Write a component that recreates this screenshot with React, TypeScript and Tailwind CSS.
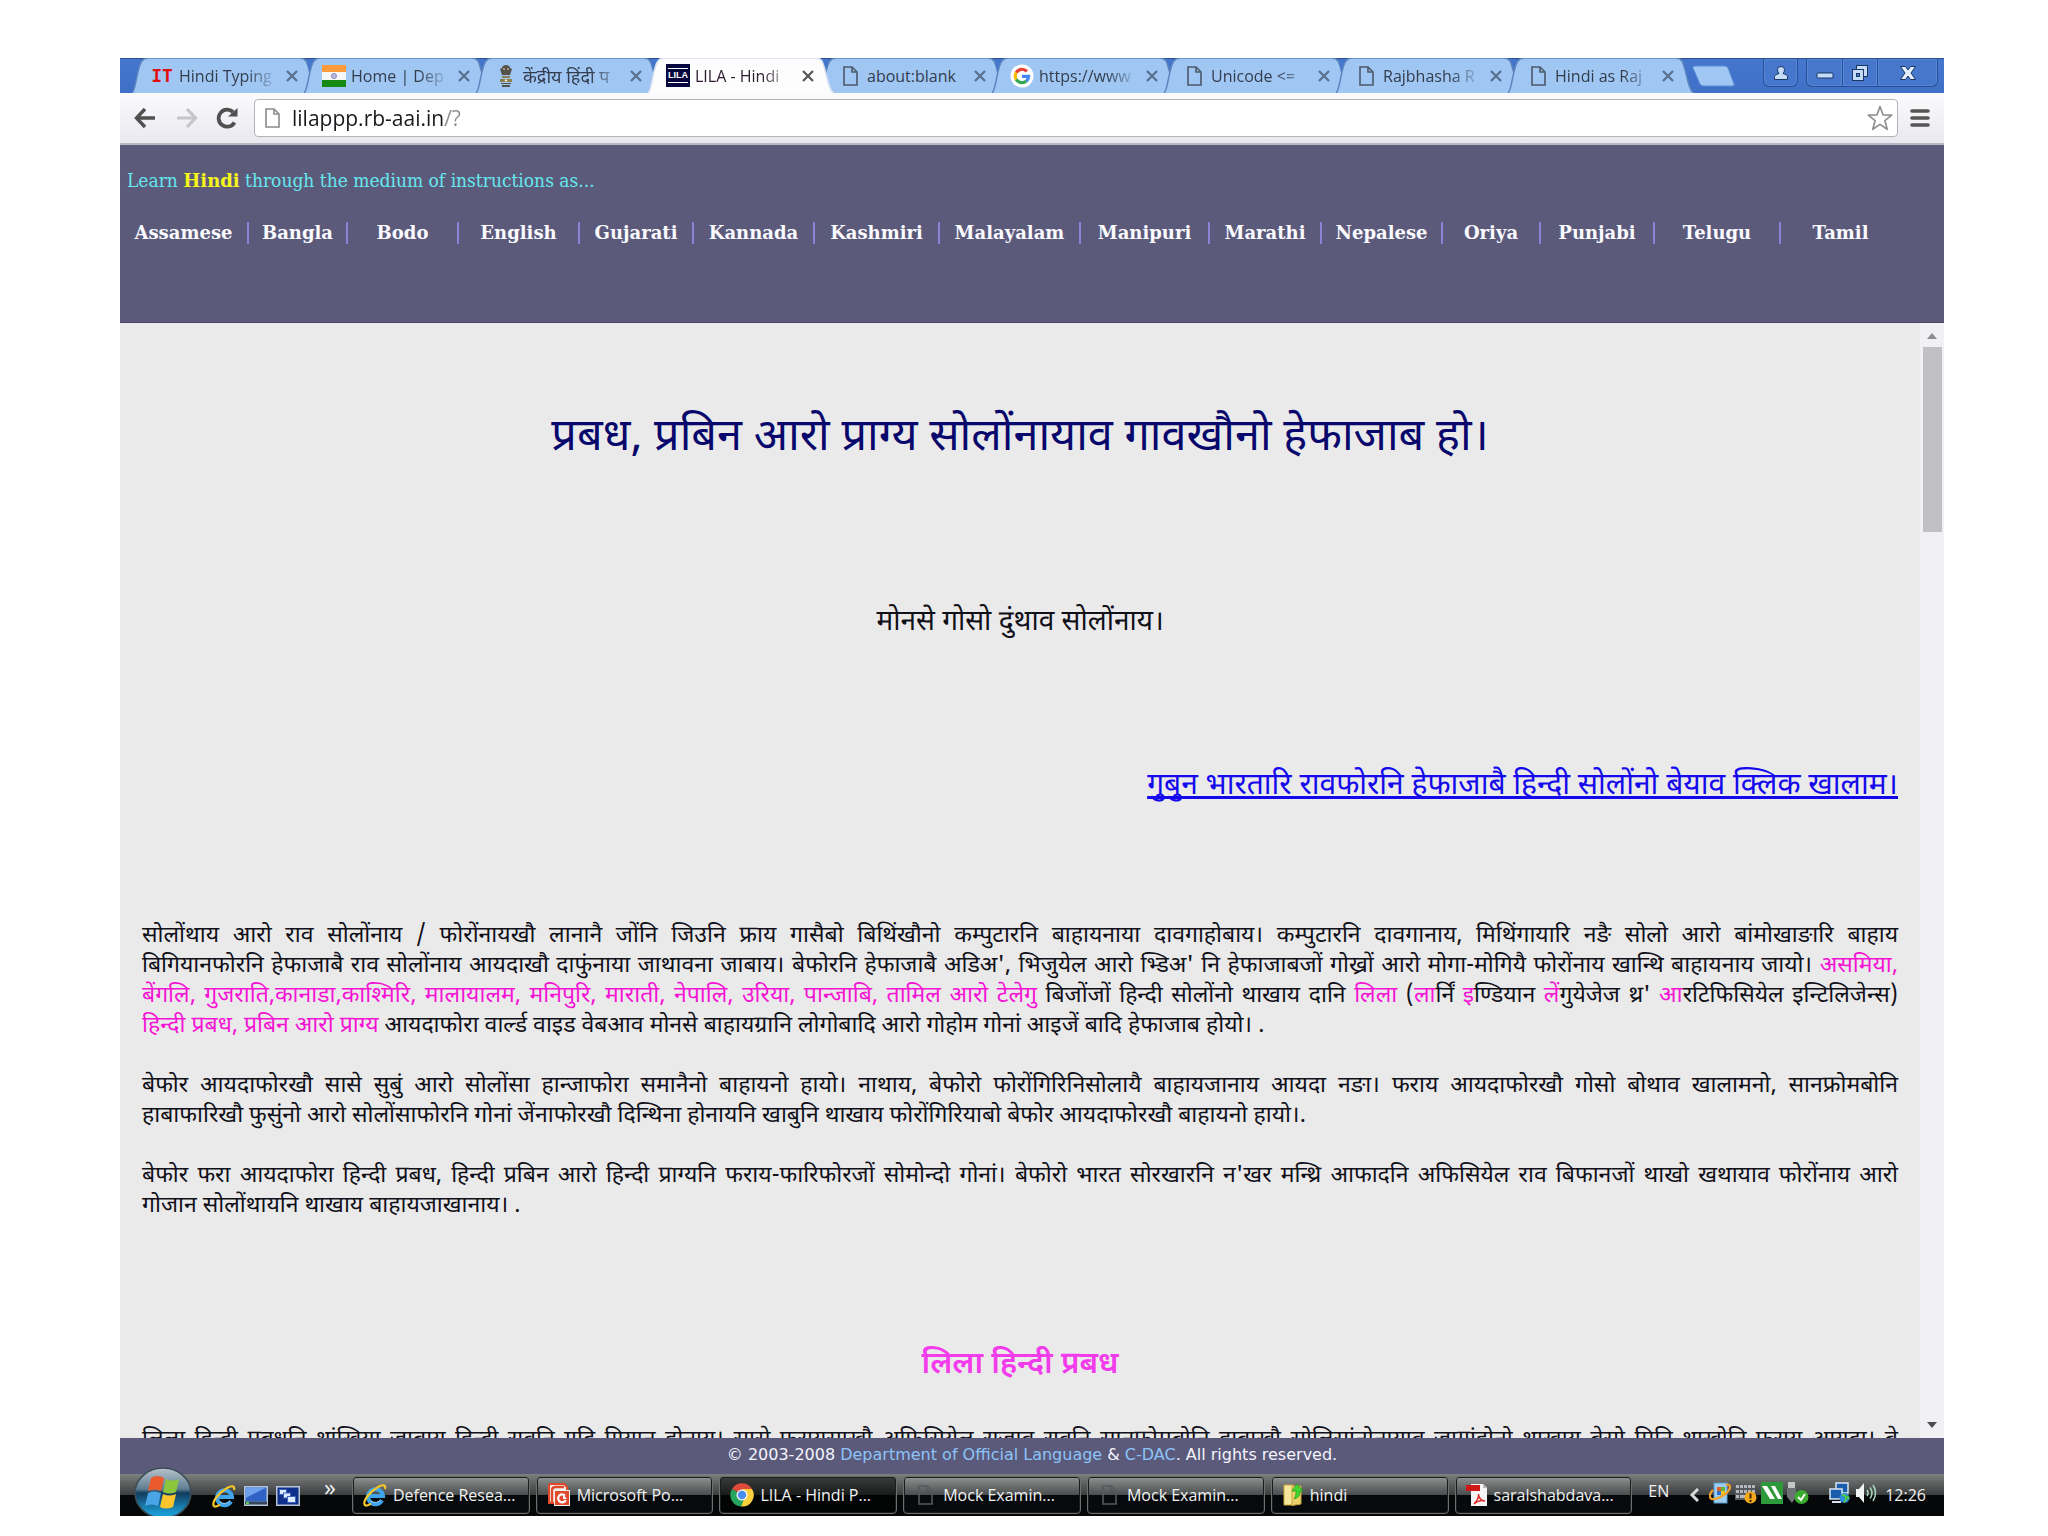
import React from "react";

const UI = "font-['Open_Sans','Noto_Sans',sans-serif]";

function PageIcon({ className = "" }: { className?: string }) {
  return (
    <svg viewBox="0 0 15 20" className={"h-5 w-[15px] " + className} fill="none" stroke="currentColor" strokeWidth="1.6" aria-hidden="true">
      <path d="M1 1h8l5 5v13H1z" />
      <path d="M9 1v5h5" />
    </svg>
  );
}

function FlagIcon() {
  return (
    <svg viewBox="0 0 24 24" className="h-6 w-6" aria-hidden="true">
      <rect y="1" width="24" height="7" fill="#ff9b3a" />
      <rect y="8" width="24" height="8" fill="#f6f6f6" />
      <rect y="16" width="24" height="7" fill="#168a10" />
      <circle cx="12" cy="12" r="2.500" fill="#b9b9dc" stroke="#8a8ac0" />
    </svg>
  );
}

function EmblemIcon() {
  return (
    <svg viewBox="0 0 16 22" className="h-[22px] w-4" fill="#55524a" aria-hidden="true">
      <path d="M4 3c0-2 2-3 4-3s4 1 4 3l2 1-1 3-1 3H4L3 7 2 4z" />
      <path d="M4 11h8v2H4zM2 14h12v3H2z" fill="#8a7f50" />
      <path d="M3 18h10v1H3zM4 20h8v2H4z" />
      <circle cx="6" cy="4" r="1" fill="#b4b09a" />
      <circle cx="10" cy="4" r="1" fill="#b4b09a" />
      <circle cx="8" cy="15.500" r="1.200" fill="#ece6c8" />
    </svg>
  );
}

function LilaIcon() {
  return (
    <span className="flex h-[23px] w-6 items-center justify-center bg-[#06073f]">
      <span className="border-y border-white text-[9px] leading-[13px] font-bold text-white font-['Liberation_Sans',sans-serif]">LILA</span>
    </span>
  );
}

function GoogleIcon() {
  return (
    <svg viewBox="0 0 24 24" className="h-6 w-6" fill="none" strokeWidth="3.200" aria-hidden="true">
      <circle cx="12" cy="12" r="11.500" fill="#fff" />
      <path d="M16.900 7.400A6.700 6.700 0 0 0 6.200 8.600" stroke="#ea4335" />
      <path d="M6.200 8.600a6.700 6.700 0 0 0 0 6.800" stroke="#fbbc05" />
      <path d="M6.200 15.400a6.700 6.700 0 0 0 10.200 1.600" stroke="#34a853" />
      <path d="M16.400 17a6.700 6.700 0 0 0 2.200-4.600H12" stroke="#4285f4" />
    </svg>
  );
}

function ITIcon() {
  return <span className="w-6 text-center text-[18px] leading-6 font-bold text-[#e01010] font-['DejaVu_Sans_Mono',monospace]">IT</span>;
}

const tabs: { title: string; icon: React.ReactNode; active?: boolean; hindi?: boolean }[] = [
  { title: "Hindi Typing", icon: <ITIcon /> },
  { title: "Home | Dep", icon: <FlagIcon /> },
  { title: "केंद्रीय हिंदी प", icon: <EmblemIcon />, hindi: true },
  { title: "LILA - Hindi", icon: <LilaIcon />, active: true },
  { title: "about:blank", icon: <PageIcon className="text-[#4c5968]" /> },
  { title: "https://www", icon: <GoogleIcon /> },
  { title: "Unicode <=", icon: <PageIcon className="text-[#4c5968]" /> },
  { title: "Rajbhasha R", icon: <PageIcon className="text-[#4c5968]" /> },
  { title: "Hindi as Raj", icon: <PageIcon className="text-[#4c5968]" /> },
];

function Tab({ title, icon, active, hindi }: { title: string; icon: React.ReactNode; active?: boolean; hindi?: boolean }) {
  return (
    <div className={"relative -mr-3.5 flex h-[35px] w-[186px] min-w-0 items-center pl-[18px] pr-4 " + (active ? "z-10" : "")}>
      <svg viewBox="0 0 186 35" preserveAspectRatio="none" className="absolute inset-0 h-full w-full" aria-hidden="true">
        <path d="M0 35C4 33 5 8 10 3Q12 0 16 0H168Q172 0 174 3C178 10 180 33 186 35" fill={active ? "#fdfdfe" : "#a0c6f4"} stroke={active ? "#d5dfee" : "#5a84be"} strokeWidth="1.500" />
      </svg>
      <div className="relative flex w-6 shrink-0 justify-center">{icon}</div>
      <span
        className={
          "relative ml-[5px] min-w-0 flex-1 overflow-hidden leading-6 whitespace-nowrap " +
          (hindi ? "text-lg " : "text-base ") +
          (title === "about:blank" ? "" : "[mask-image:linear-gradient(to_right,black_68%,transparent_100%)] ") +
          (active ? "text-[#2a1a2c]" : "text-[#333d4c]")
        }
      >
        {title}
      </span>
      <button aria-label={"Close " + title} className={"relative ml-1 shrink-0 p-1 " + (active ? "text-[#555]" : "text-[#59708f]")}>
        <svg viewBox="0 0 12 12" className="h-3 w-3" stroke="currentColor" strokeWidth="2.200" aria-hidden="true">
          <path d="M1 1l10 10M11 1L1 11" />
        </svg>
      </button>
    </div>
  );
}

function WindowControls() {
  const cell = "flex h-7 items-center justify-center border border-t-0 border-[#2a4f94] bg-[#4677cc] shadow-[inset_0_0_0_1px_#5585d6]";
  return (
    <div className="mr-1.5 flex items-start">
      <button aria-label="Profile" className={cell + " mr-2 w-[35px] rounded-b-md"}>
        <svg viewBox="0 0 16 16" className="h-4 w-4" fill="#c4dcf8" stroke="#1c3764" aria-hidden="true">
          <path d="M1.500 14.500V11.500Q1.500 9.500 6 8.500 4.500 7 4.500 4.500 4.500 1.500 8 1.500T11.500 4.500Q11.500 7 10 8.500q4.500 1 4.500 3v3z" />
        </svg>
      </button>
      <button aria-label="Minimize" className={cell + " w-[37px] rounded-bl-md"}>
        <svg viewBox="0 0 20 16" className="h-4 w-5" fill="#c4dcf8" stroke="#1c3764" aria-hidden="true">
          <rect x="2" y="8" width="16" height="5" rx="1" />
        </svg>
      </button>
      <button aria-label="Restore" className={cell + " w-[35px] border-l-0"}>
        <svg viewBox="0 0 20 20" className="h-5 w-5" fill="#c4dcf8" stroke="#1c3764" aria-hidden="true">
          <rect x="6.500" y="2.500" width="11" height="11" />
          <rect x="2.500" y="6.500" width="11" height="11" />
          <rect x="6.500" y="10.500" width="3" height="3" fill="#4a7bd0" />
        </svg>
      </button>
      <button aria-label="Close window" className={cell + " w-[60px] rounded-br-md border-l-0"}>
        <svg viewBox="0 0 18 16" className="h-4 w-[18px]" fill="#e4eefb" stroke="#1c3764" aria-hidden="true">
          <path d="M1.500 1.500h5L9 5l2.500-3.500h5L12 8l4.500 6.500h-5L9 11l-2.500 3.500h-5L6 8z" />
        </svg>
      </button>
    </div>
  );
}

function TabStrip() {
  return (
    <div className={"flex h-[35px] border-t border-[#2c4f92] bg-linear-to-b from-[#4577cf] to-[#3f6fc6] " + UI}>
      <div className="flex min-w-0 flex-1 items-end pl-3">
        {tabs.map((t) => (
          <Tab key={t.title} {...t} />
        ))}
        <button aria-label="New tab" className="ml-3 shrink-0 self-center">
          <svg viewBox="0 0 44 22" className="h-[22px] w-11" aria-hidden="true">
            <path d="M3 1h29q3 0 4 2l6 16q1 2-2 2H12q-3 0-4-2L1 3q-1-2 2-2z" fill="#a0c6f4" stroke="#5f8fd2" />
          </svg>
        </button>
      </div>
      <WindowControls />
    </div>
  );
}

function Toolbar() {
  return (
    <div className={"flex h-[52px] items-center border-b-2 border-[#b9b5c4] bg-linear-to-b from-[#fbfbfc] to-[#e9e8f0] pl-3.5 pr-3.5 " + UI}>
      <button aria-label="Back" className="text-[#505050]">
        <svg viewBox="0 0 22 22" className="h-[22px] w-[22px]" fill="none" stroke="currentColor" strokeWidth="3.400" aria-hidden="true">
          <path d="M21 11H3M11 2L2.500 11l8.500 9" />
        </svg>
      </button>
      <button aria-label="Forward" className="ml-5 text-[#c6c6c8]">
        <svg viewBox="0 0 22 22" className="h-[22px] w-[22px]" fill="none" stroke="currentColor" strokeWidth="3.200" aria-hidden="true">
          <path d="M1 11h18M11 2l8.500 9-8.500 9" />
        </svg>
      </button>
      <button aria-label="Reload" className="ml-[18px] text-[#505050]">
        <svg viewBox="0 0 22 22" className="h-[22px] w-[22px]" fill="none" stroke="currentColor" strokeWidth="3.800" aria-hidden="true">
          <path d="M18.500 15.500A8.500 8.500 0 1 1 17 5" />
          <path d="M21.500 1v8.500H12z" fill="currentColor" stroke="none" />
        </svg>
      </button>
      <div className="ml-4 flex h-[38px] min-w-0 flex-1 items-center rounded border border-[#b4b4b8] bg-white px-2.5">
        <PageIcon className="mr-3 shrink-0 text-[#8a8a8a]" />
        <input
          aria-label="Address"
          defaultValue="lilappp.rb-aai.in/?"
          className="h-8 min-w-0 flex-1 bg-linear-to-r from-[#16181c] from-[153px] to-[#8c8c8c] to-[153px] bg-clip-text text-[21px] text-transparent outline-none"
        />
        <button aria-label="Bookmark this page" className="-mr-1.5 text-[#909090]">
          <svg viewBox="0 0 26 26" className="h-[26px] w-[26px]" fill="#fff" stroke="currentColor" strokeWidth="1.700" strokeLinejoin="round" aria-hidden="true">
            <path d="M13 1.500l3 8.300 8.700.4-6.800 5.400 2.300 8.700L13 19.400l-7.200 4.900 2.300-8.700L1.300 10.200l8.700-.4z" />
          </svg>
        </button>
      </div>
      <button aria-label="Menu" className="ml-3 text-[#555]">
        <svg viewBox="0 0 20 20" className="h-5 w-5" stroke="currentColor" strokeWidth="3.600" strokeLinecap="round" aria-hidden="true">
          <path d="M2 3h16M2 10h16M2 17h16" />
        </svg>
      </button>
    </div>
  );
}

const languages = ["Assamese", "Bangla", "Bodo", "English", "Gujarati", "Kannada", "Kashmiri", "Malayalam", "Manipuri", "Marathi", "Nepalese", "Oriya", "Punjabi", "Telugu", "Tamil"];

function SiteHeader() {
  return (
    <header className="h-[178px] border-b border-[#4a4664] bg-[#5b5a7b] pt-5 font-['DejaVu_Serif',serif]">
      <p className="pl-[7px] text-[19px] leading-[30px] text-[#66e8ee] font-['DejaVu_Serif_Condensed','DejaVu_Serif',serif]">
        Learn <b className="text-lg leading-[30px] text-[#f6f61c] font-['DejaVu_Serif',serif]">Hindi</b> through the medium of instructions as...
      </p>
      <nav aria-label="Languages" className="mt-[26px] mr-11 grid grid-cols-[129fr_99fr_111fr_121fr_114fr_121fr_125fr_141fr_129fr_112fr_121fr_98fr_114fr_126fr_119fr] divide-x-2 divide-[#8d82d6]">
        {languages.map((l) => (
          <a key={l} href="#" className="text-center text-lg leading-[22px] font-bold text-[#fafaff]">
            {l}
          </a>
        ))}
      </nav>
    </header>
  );
}

function P({ children }: { children: React.ReactNode }) {
  return <span className="text-[#f414d4]">{children}</span>;
}

function Lines({ lines, className = "", continues = false }: { lines: React.ReactNode[]; className?: string; continues?: boolean }) {
  return (
    <p className={"text-[23px] leading-[30px] text-[#101018] " + className}>
      {lines.map((line, i) => (
        <span key={i} className={"block whitespace-nowrap [text-align-last:justify] " + (continues ? "" : "last:[text-align-last:left]")}>
          {line}
        </span>
      ))}
    </p>
  );
}

function Content() {
  return (
    <main className="relative flex min-h-0 flex-1 overflow-hidden bg-[#ebeaeb] font-['Noto_Sans_Devanagari','Noto_Sans',sans-serif]">
      <div className="min-w-0 flex-1 pr-[22px] pl-[22px]">
        <h1 className="mt-[84px] text-center text-[45px] leading-[64px] text-[#08086c]">प्रबध, प्रबिन आरो प्राग्य सोलोंनायाव गावखौनो हेफाजाब हो।</h1>
        <p className="mt-[132px] text-center text-[28px] leading-10 text-[#101018]">मोनसे गोसो दुंथाव सोलोंनाय।</p>
        <p className="mt-[124px] text-right text-[30px] leading-10">
          <a href="#" className="text-[#1408ec] underline decoration-[3px] underline-offset-2 [text-decoration-skip-ink:none]">
            गुबुन भारतारि रावफोरनि हेफाजाबै हिन्दी सोलोंनो बेयाव क्लिक खालाम।
          </a>
        </p>
        <Lines
          className="mt-[114px]"
          lines={[
            <>सोलोंथाय आरो राव सोलोंनाय / फोरोंनायखौ लानानै जोंनि जिउनि फ्राय गासैबो बिथिंखौनो कम्पुटारनि बाहायनाया दावगाहोबाय। कम्पुटारनि दावगानाय, मिथिंगायारि नङै सोलो आरो बांमोखाङारि बाहाय</>,
            <>बिगियानफोरनि हेफाजाबै राव सोलोंनाय आयदाखौ दाफुंनाया जाथावना जाबाय। बेफोरनि हेफाजाबै अडिअ', भिजुयेल आरो भ्डिअ' नि हेफाजाबजों गोख्रों आरो मोगा-मोगियै फोरोंनाय खान्थि बाहायनाय जायो। <P>असमिया,</P></>,
            <><P>बेंगलि, गुजराति,कानाडा,काश्मिरि, मालायालम, मनिपुरि, माराती, नेपालि, उरिया, पान्जाबि, तामिल आरो टेलेगु</P> बिजोंजों हिन्दी सोलोंनो थाखाय दानि <P>लिला</P> (<P>ला</P>र्निं <P>इ</P>ण्डियान <P>लें</P>गुयेजेज थ्र' <P>आ</P>रटिफिसियेल इन्टिलिजेन्स)</>,
            <><P>हिन्दी प्रबध, प्रबिन आरो प्राग्य</P> आयदाफोरा वार्ल्ड वाइड वेबआव मोनसे बाहायग्रानि लोगोबादि आरो गोहोम गोनां आइजें बादि हेफाजाब होयो। .</>,
          ]}
        />
        <Lines
          className="mt-[30px]"
          lines={[
            "बेफोर आयदाफोरखौ सासे सुबुं आरो सोलोंसा हान्जाफोरा समानैनो बाहायनो हायो। नाथाय, बेफोरो फोरोंगिरिनिसोलायै बाहायजानाय आयदा नङा। फराय आयदाफोरखौ गोसो बोथाव खालामनो, सानफ्रोमबोनि",
            "हाबाफारिखौ फुसुंनो आरो सोलोंसाफोरनि गोनां जेंनाफोरखौ दिन्थिना होनायनि खाबुनि थाखाय फोरोंगिरियाबो बेफोर आयदाफोरखौ बाहायनो हायो।.",
          ]}
        />
        <Lines
          className="mt-[30px]"
          lines={[
            "बेफोर फरा आयदाफोरा हिन्दी प्रबध, हिन्दी प्रबिन आरो हिन्दी प्राग्यनि फराय-फारिफोरजों सोमोन्दो गोनां। बेफोरो भारत सोरखारनि न'खर मन्थ्रि आफादनि अफिसियेल राव बिफानजों थाखो खथायाव फोरोंनाय आरो",
            "गोजान सोलोंथायनि थाखाय बाहायजाखानाय। .",
          ]}
        />
        <h2 className="mt-[125px] text-center text-[31px] leading-10 font-semibold text-[#f23cec]">लिला हिन्दी प्रबध</h2>
        <Lines
          continues
          className="mt-[39px]"
          lines={[
            "लिला हिन्दी प्रबधनि थांखिया जाबाय हिन्दी रावनि गुदि गियान होनाय। सासे फरायसाखौ अफिसियेल राजाव रावनि सानफ्रोमबोनि हाबाखौ सोलिसांनोनायाव जाग्रांहोनो थाखाय बेसो मिनि थाखोनि फराय आयदा। बे",
          ]}
        />
      </div>
      <div className="flex w-6 shrink-0 flex-col items-center justify-between bg-[#f1f0f3] py-2.5" aria-hidden="true">
        <svg viewBox="0 0 10 6" className="h-1.5 w-2.5 fill-[#8c8c90]"><path d="M0 6l5-6 5 6z" /></svg>
        <div className="mt-2 h-[185px] w-[19px] bg-[#c1c0c3]" />
        <div className="flex-1" />
        <svg viewBox="0 0 10 6" className="h-1.5 w-2.5 fill-[#4c4c50]"><path d="M0 0l5 6 5-6z" /></svg>
      </div>
    </main>
  );
}

function SiteFooter() {
  return (
    <footer className="relative h-9 bg-[#5b5a7b] text-center text-base leading-[34px] text-[#f4f4fc] font-['DejaVu_Sans',sans-serif]">
      © 2003-2008 <a href="#" className="text-[#8cc4f8]">Department of Official Language</a> &amp; <a href="#" className="text-[#8cc4f8]">C-DAC</a>. All rights reserved.
    </footer>
  );
}

function IEIcon() {
  return (
    <svg viewBox="0 0 24 24" className="h-6 w-6 shrink-0" fill="none" aria-hidden="true">
      <path d="M19 17.500A7.500 7.500 0 1 1 20 13H7" stroke="#3fa4ea" strokeWidth="4" />
      <path d="M18 16.500A7 7 0 0 1 8 18" stroke="#9ad6fa" strokeWidth="1" />
      <path d="M22 6c1-4-2-5-7-2C8 8 0 17 1.500 21.500c.8 2 4 1 6.500-.8" stroke="#f5c528" strokeWidth="2.200" />
    </svg>
  );
}

function DesktopIcon() {
  return (
    <svg viewBox="0 0 24 20" className="h-5 w-6" aria-hidden="true">
      <rect width="24" height="20" fill="#b8c4d4" />
      <rect x="1.500" y="1.500" width="21" height="14" fill="#2f62c4" />
      <path d="M1.500 1.500h21L1.500 12z" fill="#6fa0ec" />
      <rect x="1" y="15.500" width="22" height="3" fill="#33465e" />
      <circle cx="3.500" cy="17" r="1.600" fill="#5fd05a" />
    </svg>
  );
}

function SwitchIcon() {
  return (
    <svg viewBox="0 0 24 20" className="h-5 w-6" aria-hidden="true">
      <rect width="24" height="20" fill="#b8c4d4" />
      <rect x="1.500" y="1.500" width="21" height="17" fill="#0f2f8c" />
      <g fill="#dcebff" stroke="#3a62b8">
        <rect x="3.500" y="3.500" width="7" height="5" />
        <rect x="7.500" y="7" width="7" height="5" />
        <rect x="11.500" y="10.500" width="8" height="6" />
      </g>
    </svg>
  );
}

function PowerPointIcon() {
  return (
    <svg viewBox="0 0 24 24" className="h-6 w-6 shrink-0" fill="none" aria-hidden="true">
      <path d="M2 3Q2 1 4 1h13l3 3v16H2z" fill="#f0f0ee" stroke="#e0492c" strokeWidth="2" />
      <path d="M5 19V7q0-3 4-3h8" stroke="#e0492c" strokeWidth="2.400" />
      <rect x="7" y="7" width="16" height="16" fill="#f0f0ee" />
      <rect x="8" y="8" width="14" height="14" fill="#e0492c" />
      <path d="M18 12.500a4 4 0 1 0 .8 4.500" stroke="#fff" strokeWidth="2.200" />
      <path d="M16 11v5h4z" fill="#fff" />
    </svg>
  );
}

function ChromeIcon() {
  return (
    <svg viewBox="0 0 24 24" className="h-6 w-6 shrink-0" aria-hidden="true">
      <path d="M12 12L2 6a11.500 11.500 0 0 1 20 0z" fill="#de4a3c" />
      <path d="M12 12L2 6a11.500 11.500 0 0 0 9 17.500l5-8z" fill="#26a35c" />
      <path d="M12 12h4l-5 11.500A11.500 11.500 0 0 0 22 6H12z" fill="#fccf3c" />
      <circle cx="12" cy="12" r="5.500" fill="#f4f4f4" />
      <circle cx="12" cy="12" r="4.200" fill="#4a8cf0" />
    </svg>
  );
}

function FolderIcon() {
  return (
    <svg viewBox="0 0 22 24" className="h-6 w-[22px] shrink-0" aria-hidden="true">
      <path d="M2 2h9v20H2z" fill="#f6e89a" stroke="#c8a83c" />
      <path d="M10 3h9v18l-9 1.500z" fill="#ecd068" stroke="#c8a83c" />
      <path d="M15 1l6 7h-3c0 5-2 7-6 8 2-3 2-5 2-8h-4z" fill="#3fd430" stroke="#1d9618" strokeWidth=".7" />
    </svg>
  );
}

function PdfIcon() {
  return (
    <svg viewBox="0 0 22 24" className="h-6 w-[22px] shrink-0" aria-hidden="true">
      <path d="M5 1h12l4 4v18H5z" fill="#f6f4f4" />
      <path d="M17 1v4h4z" fill="#bcbcbc" />
      <rect y="2" width="14" height="6" fill="#d01818" />
      <path d="M8 21c3-3 5-6 4.500-10 0 4 3 7 6.500 7-4-1-8 0-11 3z" fill="none" stroke="#e02424" strokeWidth="1.400" />
    </svg>
  );
}

function StartOrb() {
  return (
    <button aria-label="Start" className="relative z-10 -mt-[7px] h-[49px] w-[58px] shrink-0 overflow-hidden">
      <svg viewBox="0 0 58 49" className="h-full w-full" aria-hidden="true">
        <defs>
          <linearGradient id="orb" x1="0" y1="0" x2="0" y2="1">
            <stop offset="0" stopColor="#b8c4cc" />
            <stop offset=".42" stopColor="#5f7e92" />
            <stop offset=".5" stopColor="#123c5c" />
            <stop offset=".9" stopColor="#1b9ad2" />
          </linearGradient>
        </defs>
        <ellipse cx="29" cy="26" rx="28" ry="25" fill="url(#orb)" stroke="#3c4c56" strokeWidth="1.500" />
        <path d="M17 11q6-4 13 0l-3 13q-6-3-13 0z" fill="#ea5a2c" />
        <path d="M32 12q6 3 13 0l-3 13q-7 3-13 0z" fill="#8cc63c" />
        <path d="M14 26q6-3 13 0l-3 13q-6-3-13 0z" fill="#4aa4e8" />
        <path d="M29 27q6 3 13 0l-3 13q-7 3-13 0z" fill="#fcc62c" />
      </svg>
    </button>
  );
}

const tasks: { label: string; icon: React.ReactNode; active?: boolean }[] = [
  { label: "Defence Resea...", icon: <IEIcon /> },
  { label: "Microsoft Po...", icon: <PowerPointIcon /> },
  { label: "LILA - Hindi P...", icon: <ChromeIcon />, active: true },
  { label: "Mock Examin...", icon: <PageIcon className="mx-1 shrink-0 text-[#555a5c]" /> },
  { label: "Mock Examin...", icon: <PageIcon className="mx-1 shrink-0 text-[#555a5c]" /> },
  { label: "hindi", icon: <FolderIcon /> },
  { label: "saralshabdava...", icon: <PdfIcon /> },
];

function TrayIcons() {
  return (
    <div className="mb-1 flex items-center gap-1">
      <svg viewBox="0 0 22 22" className="h-[22px] w-[22px]" aria-hidden="true">
        <rect x="5" y="1" width="13" height="20" fill="#9ccdf2" stroke="#5c9cce" />
        <path d="M8 5h4v4H8z" fill="#e0602c" /><path d="M12 5h4v4h-4z" fill="#60b43c" /><path d="M8 9h4v4H8z" fill="#2c74d0" /><path d="M12 9h4v4h-4z" fill="#f4c02c" />
        <path d="M4 8c-5 5-4 10 2 9 7-1 15-8 15-12 0-2-2-3-4-2" fill="none" stroke="#f0a028" strokeWidth="2.200" />
      </svg>
      <svg viewBox="0 0 22 22" className="h-[22px] w-[22px]" aria-hidden="true">
        <path d="M0 2h20v16H0z" fill="#55585c" />
        <path d="M1 3h3v3H1zM5 3h3v3H5zM9 3h3v3H9zM13 3h3v3h-3zM17 3h3v3h-3zM1 8h3v3H1zM5 8h3v3H5zM9 8h3v3H9zM13 8h3v3h-3zM17 8h3v3h-3zM1 13h3v3H1zM5 13h6v3H5z" fill="#b4b6ba" />
        <circle cx="15.500" cy="15.500" r="6" fill="#f4a81c" />
        <path d="M15.500 11.500v5M15.500 18v2" stroke="#3c2800" strokeWidth="2" />
      </svg>
      <svg viewBox="0 0 22 22" className="h-[22px] w-[22px]" aria-hidden="true">
        <rect width="22" height="22" fill="#2f9a3c" />
        <path d="M1 4h5l8 13H9zM10 4h4l7 13h-4z" fill="#fff" />
      </svg>
      <svg viewBox="0 0 22 22" className="h-[22px] w-[22px]" aria-hidden="true">
        <rect x="1" width="7" height="6" fill="#c4c6c8" />
        <path d="M0 6h9v9l-4 6-5-6z" fill="#6c7074" />
        <circle cx="14.500" cy="15" r="7" fill="#3cac30" />
        <path d="M11 15l3 3 4-6" fill="none" stroke="#fff" strokeWidth="2" />
      </svg>
      <svg viewBox="0 0 22 22" className="ml-4 h-[22px] w-[22px]" aria-hidden="true">
        <rect x="7" y="1" width="12" height="10" fill="#1c5cac" stroke="#d8e6f4" strokeWidth="1.500" />
        <rect x="1" y="7" width="12" height="10" fill="#1c5cac" stroke="#d8e6f4" strokeWidth="1.500" />
        <path d="M3 20h9" stroke="#d8e6f4" strokeWidth="2" />
        <circle cx="15.500" cy="16" r="5" fill="#2c8ce0" /><path d="M13 13q4 0 4 3t-2 4M18 14l2 3" stroke="#50c83c" strokeWidth="2" fill="none" />
      </svg>
      <svg viewBox="0 0 22 22" className="h-[22px] w-[22px]" fill="none" aria-hidden="true">
        <path d="M1 7h3l5-6v20l-5-6H1z" fill="#f2f4f4" />
        <path d="M12 8q2 3 0 6M15 5.500q4 5.500 0 11M18 3q5 8 0 16" stroke="#a8dcc0" strokeWidth="1.500" />
      </svg>
    </div>
  );
}

function Taskbar() {
  return (
    <div className={"flex h-[42px] items-center bg-linear-to-b from-[#7e807f] via-[#3a3d3e] via-50% to-[#050708] to-50% text-[#f0f2f2] " + UI}>
      <div className="ml-3.5 self-start"><StartOrb /></div>
      <div className="ml-5 flex items-center gap-2 pt-0.5">
        <IEIcon />
        <DesktopIcon />
        <SwitchIcon />
      </div>
      <button aria-label="More shortcuts" className="mb-4 ml-6 text-2xl leading-5">»</button>
      <div className="ml-4 flex min-w-0 flex-1 gap-1.5">
        {tasks.map((t, i) => (
          <button
            key={i}
            className={
              "flex h-[38px] min-w-0 flex-1 items-center gap-1.5 rounded border border-[#6c706f] px-2.5 text-base shadow-[inset_0_0_0_1px_#1c1e1e] " +
              (t.active
                ? "bg-linear-to-b from-[#3a3d3c] via-[#1a1c1c] via-50% to-[#020303] to-50%"
                : "bg-linear-to-b from-[#909392] via-[#4a4d4d] via-50% to-[#070a0c] to-50%")
            }
          >
            {t.icon}
            <span className="truncate">{t.label}</span>
          </button>
        ))}
      </div>
      <span className="mb-2 ml-4 text-base">EN</span>
      <button aria-label="Show hidden icons" className="ml-5 mr-2.5">
        <svg viewBox="0 0 10 14" className="h-3.5 w-2.5" fill="none" stroke="#d8dada" strokeWidth="3" aria-hidden="true"><path d="M9 1L3 7l6 6" /></svg>
      </button>
      <TrayIcons />
      <span className="mr-[18px] ml-2 text-base">12:26</span>
    </div>
  );
}

export default function App() {
  return (
    <div className="flex h-screen flex-col bg-white pt-[58px] pr-[104px] pb-5 pl-[120px]">
      <TabStrip />
      <Toolbar />
      <SiteHeader />
      <Content />
      <SiteFooter />
      <Taskbar />
    </div>
  );
}
